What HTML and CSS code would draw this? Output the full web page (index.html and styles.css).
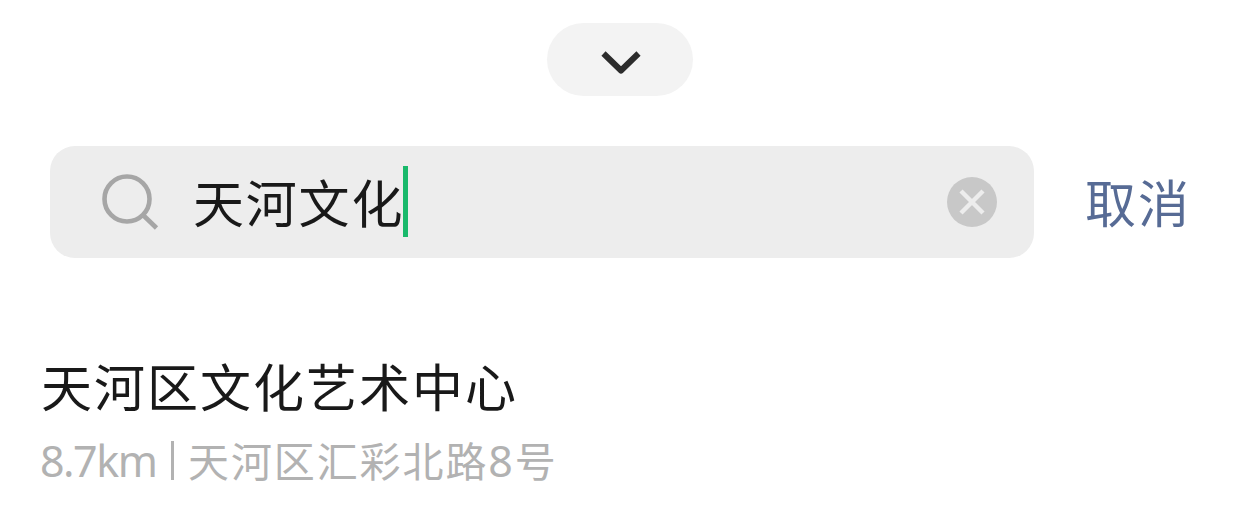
FILE: index.html
```html
<!DOCTYPE html>
<html lang="zh-CN">
<head>
  <meta charset="UTF-8">
  <meta name="viewport" content="width=device-width, initial-scale=1.0">

  <title>搜索地点</title>
  <link rel="stylesheet" href="styles.css">
</head>
<body>

<button type="button" class="collapse" aria-label="收起">
  <svg width="42" height="28" viewBox="0 0 42 28">
    <path d="M3.5 4.5 L21 21.5 L38.5 4.5" fill="none" stroke="#2c2c2c" stroke-width="6" stroke-linejoin="round"/>
  </svg>
</button>

<div class="search">
  <div class="search-box">
    <svg class="search-icon" width="60" height="60" viewBox="0 0 60 60">
      <circle cx="27" cy="27" r="22.5" fill="none" stroke="#a6a6a6" stroke-width="4.6"/>
      <path d="M43 43 L56.5 56" stroke="#a6a6a6" stroke-width="4.6"/>
    </svg>
    <span class="keyword">天河文化</span>
    <span class="caret"></span>
    <svg class="clear" width="50" height="50" viewBox="0 0 50 50">
      <circle cx="25" cy="25" r="25" fill="#c8c8c8"/>
      <path d="M14 14 L36 36 M36 14 L14 36" stroke="#ededed" stroke-width="4.5"/>
    </svg>
  </div>
  <span class="cancel">取消</span>
</div>

<div class="result">
  <div class="name">天河区文化艺术中心</div>
  <div class="address">
    <span class="distance">8.7km</span>
    <span class="divider"></span>
    <span class="street">天河区汇彩北路<span class="number">8</span>号</span>
  </div>
</div>

</body>
</html>
```
FILE: styles.css
```css
body {
  margin: 0;
  padding-top: 23px;
  background-color: white;
  font-family: 'Noto Sans CJK SC', sans-serif;
}

.collapse {
  display: flex;
  align-items: center;
  justify-content: center;
  width: 146px;
  height: 73px;
  margin: 0 0 50px 547px;
  padding: 7px 0 0 2px;
  border: none;
  border-radius: 37px;
  background-color: #f3f3f3;
}

.search {
  display: flex;
  align-items: center;
  height: 112px;
  margin-left: 50px;
}

.search-box {
  display: flex;
  align-items: center;
  box-sizing: border-box;
  width: 984px;
  height: 112px;
  padding: 0 37px 0 50px;
  border-radius: 25px;
  background-color: #ededed;
}

.keyword {
  margin-left: 33px;
  font-size: 51px;
  line-height: 108px;
  letter-spacing: 1.8px;
  color: #191919;
  padding-bottom: 2px;
}

.caret {
  width: 5px;
  height: 71px;
  margin: 0 0 1px -1px;
  background-color: #19b96b;
}

.clear {
  margin-left: auto;
}

.cancel {
  margin-left: 51px;
  font-size: 51px;
  line-height: 110px;
  letter-spacing: 2px;
  color: #576b95;
  padding-bottom: 2px;
}

.result {
  margin: 89px 0 0 41px;
}

.name {
  font-size: 51px;
  line-height: 76px;
  letter-spacing: 2px;
  color: #191919;
}

.address {
  display: flex;
  align-items: center;
  height: 74px;
  margin-left: -1px;
  font-size: 41px;
  color: #b2b2b2;
}

.distance {
  width: 117px;
  font-family: 'Noto Sans', sans-serif;
  font-size: 43px;
  letter-spacing: -1.5px;
}

.divider {
  width: 3px;
  height: 39px;
  margin: 0 14px;
  background-color: #b2b2b2;
}

.street {
  margin-bottom: 2px;
  letter-spacing: 1.9px;
}

.number {
  font-family: 'Noto Sans', sans-serif;
  font-size: 43px;
}
```
